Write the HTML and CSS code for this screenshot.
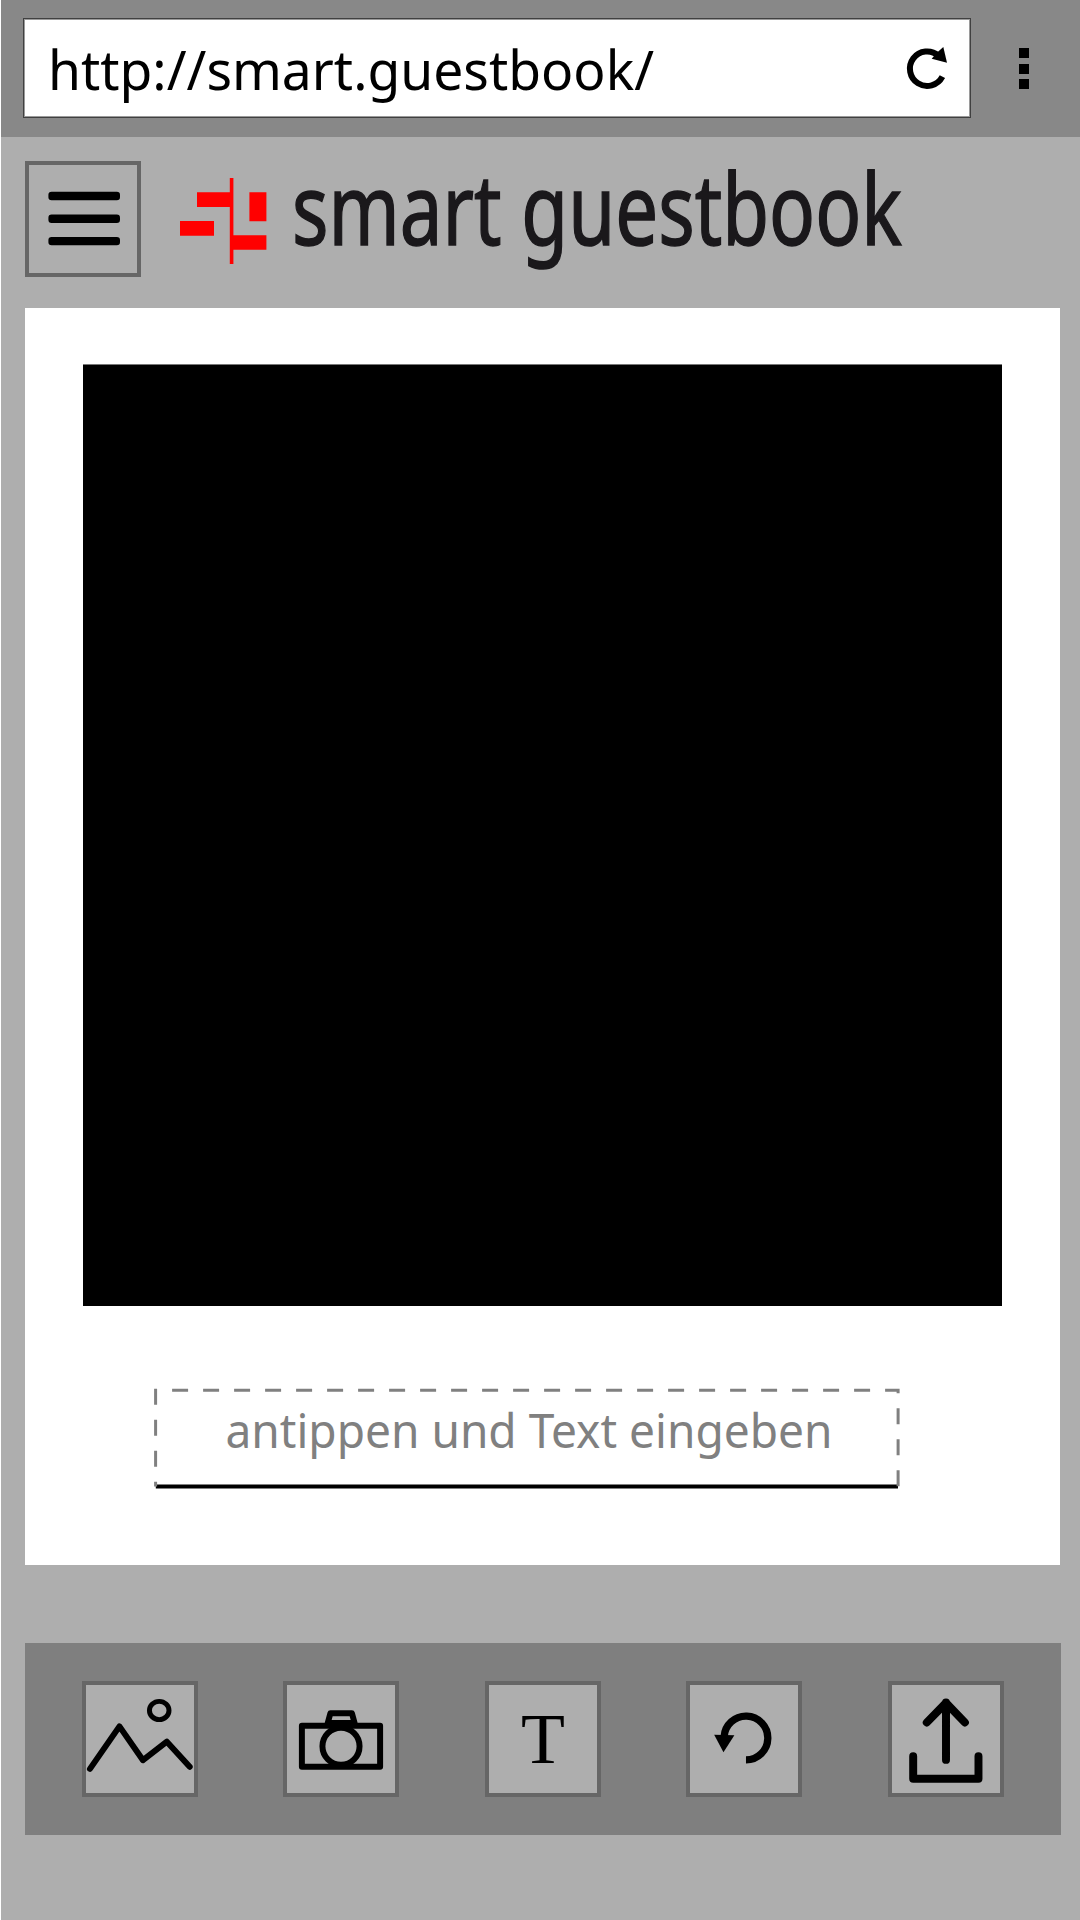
FILE: index.html
```html
<!DOCTYPE html>
<html lang="de">
<head>
<meta charset="utf-8">
<title>smart guestbook</title>
<link rel="stylesheet" href="styles.css">
</head>
<body>
<div class="screen">
  <div class="browser-bar">
    <div class="address">
      <svg class="address-text" viewBox="0 0 610 98"><text x="0" y="71" textLength="606" lengthAdjust="spacingAndGlyphs">http://smart.guestbook/</text></svg>
      <svg class="reload" viewBox="0 0 44 44">
        <path d="M37.4 30.6A17.2 17.2 0 1 1 33.5 9.8" fill="none" stroke="#000" stroke-width="6"/>
        <path d="M38.3 1 42 16.7 26.7 12.7 28.6 10.5 33.5 5.2Z"/>
      </svg>
    </div>
    <div class="dots"><i></i><i></i><i></i></div>
  </div>
  <header class="header">
    <button class="tile menu" aria-label="Menü">
      <svg viewBox="0 0 116 116">
        <rect x="23.4" y="30.8" width="71.6" height="8.4" rx="3.2"/>
        <rect x="23.4" y="53.5" width="71.6" height="8.4" rx="3.2"/>
        <rect x="23.4" y="75.9" width="71.6" height="8.4" rx="3.2"/>
      </svg>
    </button>
    <svg class="logo" viewBox="0 0 87 86" fill="#f00">
      <path d="M49.8 0h3.6v86h-3.6zM17 14.3h34v14.6H17zM0 43h34v14.8H0zM69.4 14.3h17v28.9h-17zM51 57.2h35.4v14.5H51z"/>
    </svg>
    <svg class="brand" viewBox="0 0 616 150"><text x="-1" y="101" textLength="610" lengthAdjust="spacingAndGlyphs">smart guestbook</text></svg>
  </header>
  <main class="card">
    <div class="photo"></div>
    <div class="caption">
      <svg viewBox="0 0 746 104">
        <path d="M1.8 98.6H744" stroke="#000" stroke-width="4"/>
        <path d="M1.6 98.6V2.3H744.1V98.8" fill="none" stroke="#808080" stroke-width="3" stroke-dasharray="16 15" stroke-dashoffset="11.2"/>
        <text x="71.5" y="60.4" textLength="607" lengthAdjust="spacingAndGlyphs">antippen und Text eingeben</text>
      </svg>
    </div>
  </main>
  <nav class="toolbar">
    <button class="tile" aria-label="Bild">
      <svg viewBox="0 0 350 350" class="line">
        <path stroke-width="18" d="M24 265 113 137 184 239 256 183 325 259"/>
        <ellipse cx="233" cy="89" rx="29.5" ry="27.5" stroke-width="15"/>
      </svg>
    </button>
    <button class="tile" aria-label="Kamera">
      <svg viewBox="0 0 350 350" class="line">
        <g stroke-width="18">
          <rect x="57" y="135" width="236" height="124"/>
          <circle cx="175" cy="197" r="56"/>
          <path d="M135 127 143 97H208L216 127Z"/>
        </g>
      </svg>
    </button>
    <button class="tile" aria-label="Text">
      <svg viewBox="0 0 350 350"><text class="letter" x="175" y="248" text-anchor="middle">T</text></svg>
    </button>
    <button class="tile" aria-label="Rückgängig">
      <svg viewBox="0 0 350 350">
        <path d="M181 238A66 66 0 1 0 115 168" fill="none" stroke="#000" stroke-width="22"/>
        <path d="M85 162 146 164 113 215Z"/>
      </svg>
    </button>
    <button class="tile" aria-label="Hochladen">
      <svg viewBox="0 0 350 350" class="line">
        <path stroke-width="24" d="M175 238V65M117 125 175 66 232 125M76 227V295H273V227"/>
      </svg>
    </button>
  </nav>
</div>
</body>
</html>
```
FILE: styles.css
```css
* { box-sizing: border-box; }

body {
  margin: 0;
  background: #fff;
  font-family: "Noto Sans", sans-serif;
}

svg {
  display: block;
  flex: none;
  overflow: visible;
}

.screen {
  height: 1920px;
  margin-left: 1px;
  background: #aeaeae;
}

.browser-bar {
  display: flex;
  align-items: flex-start;
  height: 137px;
  padding: 18px 0 0 22px;
  background: #888;
}

.address {
  display: flex;
  align-items: center;
  width: 948px;
  height: 100px;
  padding-left: 24px;
  background: #fff;
  border: 1px solid #404040;
  box-shadow: inset 0 0 0 1px #9a9a9a;
}

.address-text {
  width: 610px;
  height: 98px;
  font-size: 55.5px;
}

.reload {
  width: 44px;
  height: 44px;
  margin-left: 247px;
}

.dots {
  display: grid;
  gap: 5.5px;
  margin: 30px 0 0 48px;
}

.dots i {
  width: 10px;
  height: 10px;
  background: #000;
}

.header {
  display: flex;
  align-items: center;
  height: 171px;
  padding: 0 0 8px 24px;
}

.tile {
  width: 116px;
  height: 116px;
  padding: 0;
  border: 0;
  background: #aeaeae;
  box-shadow: inset 0 0 0 4px #666;
}

.tile svg {
  width: 100%;
  height: 100%;
}

.line {
  fill: none;
  stroke: #000;
  stroke-linecap: round;
  stroke-linejoin: round;
}

.letter {
  font-family: "Liberation Serif", serif;
  font-size: 217px;
}

.logo {
  width: 87px;
  height: 86px;
  margin: 4px 0 0 39px;
}

.brand {
  width: 616px;
  height: 150px;
  margin-left: 26px;
  font-size: 99.5px;
  fill: #1a181b;
  stroke: #1a181b;
  stroke-width: 1.5px;
}

.card {
  width: 1035px;
  height: 1257px;
  margin-left: 24px;
  padding: 56px 58px 0;
  background: #fff;
}

.photo {
  height: 942px;
  background: #000;
  border-top: 1px solid #777;
}

.caption {
  padding: 82px 0 0 71px;
}

.caption svg {
  width: 746px;
  height: 104px;
}

.caption text {
  font-size: 47px;
  fill: #808080;
}

.toolbar {
  display: flex;
  align-items: center;
  justify-content: space-between;
  width: 1036px;
  height: 192px;
  margin: 78px 0 0 24px;
  padding: 0 57px 0 56.5px;
  background: #7f7f7f;
}
```
